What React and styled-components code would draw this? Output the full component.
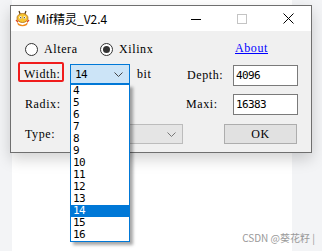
import React from "react";
import styled, { createGlobalStyle } from "styled-components";

const GlobalStyle = createGlobalStyle`
  html, body {
    margin: 0;
    padding: 0;
    width: 322px;
    height: 251px;
    overflow: hidden;
  }
`;

const LABEL_FONT = `"Liberation Serif", "Times New Roman", serif`;
const DIGIT_FONT = `"DejaVu Sans Mono", "Liberation Mono", monospace`;

const Page = styled.div`
  position: relative;
  display: flex;
  width: 322px;
  height: 251px;
`;

const SideStrip = styled.div`
  width: ${(p) => p.$w}px;
  background: #f3f4f6;
`;

const Canvas = styled.div`
  flex: 1;
  background: #ffffff;
`;

const Window = styled.div`
  position: absolute;
  left: 10px;
  top: 5px;
  width: 302px;
  height: 148px;
  box-sizing: border-box;
  border: 1px solid #6f6f6f;
  box-shadow: 0 6px 14px rgba(0, 0, 0, 0.18);
  display: flex;
  flex-direction: column;
`;

const TitleBar = styled.div`
  height: 25px;
  background: #ffffff;
  display: flex;
  align-items: center;
  padding-left: 4px;
`;

const TitleText = styled.span`
  margin-left: 6px;
  font-family: "Noto Sans CJK SC", "Noto Sans", sans-serif;
  font-size: 12px;
  color: #000;
  flex: 1;
`;

const CaptionButton = styled.div`
  width: 46px;
  height: 25px;
  display: flex;
  align-items: center;
  justify-content: center;
`;

const Client = styled.div`
  flex: 1;
  background: #f0f0f0;
  display: flex;
  flex-direction: column;
  padding-top: 8px;
`;

const Row = styled.div`
  display: flex;
  align-items: flex-start;
  height: ${(p) => p.$h}px;
  margin-top: ${(p) => p.$mt || 0}px;
  padding-left: ${(p) => p.$pl}px;
`;

const Text = styled.span`
  font-family: ${LABEL_FONT};
  font-size: 12px;
  letter-spacing: 0.6px;
  color: #000;
  line-height: ${(p) => p.$lh || 20}px;
  width: ${(p) => (p.$w ? `${p.$w}px` : "auto")};
  margin-top: ${(p) => p.$mt || 0}px;
  padding-left: ${(p) => p.$pl || 0}px;
  flex-shrink: 0;
  white-space: nowrap;
`;

const LabelBox = styled.div`
  position: relative;
  width: 46px;
  flex-shrink: 0;
`;

const RedMark = styled.div`
  position: absolute;
  left: -6px;
  top: -2px;
  width: 46px;
  height: 20px;
  box-sizing: border-box;
  border: 2px solid #f01c1c;
  border-radius: 2px;
`;

const RadioOption = styled.label`
  display: flex;
  align-items: center;
  gap: 6px;
  width: ${(p) => p.$w}px;
  height: 20px;
  flex-shrink: 0;
`;

const RadioCircle = styled.span`
  width: 13px;
  height: 13px;
  box-sizing: border-box;
  border-radius: 50%;
  border: 1px solid #333;
  background: #fff;
  display: flex;
  align-items: center;
  justify-content: center;
  &::after {
    content: "";
    display: ${(p) => (p.$checked ? "block" : "none")};
    width: 7px;
    height: 7px;
    border-radius: 50%;
    background: #333;
  }
`;

const Link = styled.a`
  font-family: ${LABEL_FONT};
  font-size: 12px;
  letter-spacing: 0.6px;
  color: #0000ff;
  text-decoration: underline;
  line-height: 18px;
  cursor: pointer;
`;

const Combo = styled.div`
  position: relative;
  width: ${(p) => p.$w}px;
  height: 20px;
  box-sizing: border-box;
  flex-shrink: 0;
  border: 1px solid ${(p) => (p.$focus ? "#0078d7" : "#bcbcbc")};
  background: ${(p) => (p.$focus ? "#cce4f7" : "#e5e5e5")};
  display: flex;
  align-items: center;
  padding: 0 6px 0 4px;
`;

const ComboValue = styled.span`
  flex: 1;
  font-family: ${DIGIT_FONT};
  font-size: 11px;
  letter-spacing: -0.6px;
  color: #000;
`;

const Input = styled.div`
  width: 65px;
  height: 21px;
  box-sizing: border-box;
  flex-shrink: 0;
  margin-top: ${(p) => p.$mt || 0}px;
  border: 1px solid #7a7a7a;
  background: #fff;
  padding-left: 2px;
  font-family: ${DIGIT_FONT};
  font-size: 11px;
  letter-spacing: -0.6px;
  line-height: 19px;
  color: #000;
`;

const Button = styled.div`
  width: 73px;
  height: 20px;
  box-sizing: border-box;
  flex-shrink: 0;
  margin-left: ${(p) => p.$ml}px;
  border: 1px solid #adadad;
  background: #e1e1e1;
  display: flex;
  align-items: center;
  justify-content: center;
  font-family: ${LABEL_FONT};
  font-size: 12px;
  letter-spacing: 0.6px;
  color: #000;
`;

const DropList = styled.ul`
  position: absolute;
  left: -1px;
  top: 19px;
  width: 60px;
  margin: 0;
  padding: 0;
  list-style: none;
  box-sizing: border-box;
  border: 1px solid #0078d7;
  background: #fff;
  box-shadow: 3px 3px 3px rgba(0, 0, 0, 0.35);
  z-index: 10;
`;

const DropItem = styled.li`
  height: 12px;
  line-height: 12px;
  padding-left: 2px;
  font-family: ${DIGIT_FONT};
  font-size: 11px;
  letter-spacing: -0.6px;
  color: ${(p) => (p.$active ? "#fff" : "#000")};
  background: ${(p) => (p.$active ? "#0078d7" : "transparent")};
`;

const Watermark = styled.div`
  position: absolute;
  right: 7px;
  bottom: 6px;
  font-family: "Noto Sans CJK SC", "Noto Sans", sans-serif;
  font-size: 10px;
  color: #9a9a9a;
  white-space: nowrap;
`;

const Chevron = ({ color = "#555" }) => (
  <svg width="9" height="5" viewBox="0 0 9 5">
    <polyline points="0.5,0.5 4.5,4.5 8.5,0.5" fill="none" stroke={color} strokeWidth="1" />
  </svg>
);

const AppIcon = () => (
  <svg width="15" height="17" viewBox="0 0 15 17">
    <path d="M4 1 L5.5 5 M11 1 L9.5 5" stroke="#5a3a10" strokeWidth="1.2" />
    <ellipse cx="7.5" cy="8" rx="5.5" ry="4.5" fill="#f7c531" stroke="#b06a12" strokeWidth="0.8" />
    <circle cx="5.5" cy="7.5" r="1.3" fill="#fff" />
    <circle cx="9.5" cy="7.5" r="1.3" fill="#fff" />
    <circle cx="5.7" cy="7.7" r="0.6" fill="#222" />
    <circle cx="9.3" cy="7.7" r="0.6" fill="#222" />
    <path d="M2 12 Q7.5 18 13 12 L12 15 Q7.5 17.5 3 15 Z" fill="#f08a1c" />
    <path d="M1 10 L3 12 M14 10 L12 12" stroke="#e0451c" strokeWidth="1.4" />
  </svg>
);

const widths = [4, 5, 6, 7, 8, 9, 10, 11, 12, 13, 14, 15, 16];

export default function App() {
  return (
    <Page>
      <GlobalStyle />
      <SideStrip $w={12} />
      <Canvas />
      <SideStrip $w={30} />

      <Window>
        <TitleBar>
          <AppIcon />
          <TitleText>Mif精灵_V2.4</TitleText>
          <CaptionButton>
            <svg width="10" height="10" viewBox="0 0 10 10">
              <line x1="0" y1="5.5" x2="10" y2="5.5" stroke="#000" strokeWidth="1" />
            </svg>
          </CaptionButton>
          <CaptionButton>
            <svg width="10" height="10" viewBox="0 0 10 10">
              <rect x="0.5" y="0.5" width="9" height="9" fill="none" stroke="#c4c4c4" strokeWidth="1" />
            </svg>
          </CaptionButton>
          <CaptionButton>
            <svg width="11" height="11" viewBox="0 0 11 11">
              <path d="M0.5 0.5 L10.5 10.5 M10.5 0.5 L0.5 10.5" stroke="#000" strokeWidth="1" />
            </svg>
          </CaptionButton>
        </TitleBar>

        <Client>
          <Row $h={20} $pl={14}>
            <RadioOption $w={75}>
              <RadioCircle />
              <Text>Altera</Text>
            </RadioOption>
            <RadioOption $w={135}>
              <RadioCircle $checked />
              <Text>Xilinx</Text>
            </RadioOption>
            <Link>About</Link>
          </Row>

          <Row $h={22} $mt={5} $pl={13}>
            <LabelBox>
              <RedMark />
              <Text $lh={20}>Width:</Text>
            </LabelBox>
            <Combo $w={60} $focus>
              <ComboValue>14</ComboValue>
              <Chevron color="#444" />
              <DropList>
                {widths.map((n) => (
                  <DropItem key={n} $active={n === 14}>
                    {n}
                  </DropItem>
                ))}
              </DropList>
            </Combo>
            <Text $w={50} $lh={20} $pl={7}>
              bit
            </Text>
            <Text $w={46} $lh={21} $mt={1}>
              Depth:
            </Text>
            <Input $mt={1}>4096</Input>
          </Row>

          <Row $h={21} $mt={8} $pl={14}>
            <Text $w={161} $lh={21}>
              Radix:
            </Text>
            <Text $w={47} $lh={21}>
              Maxi:
            </Text>
            <Input>16383</Input>
          </Row>

          <Row $h={20} $mt={9} $pl={14}>
            <Text $w={45} $lh={20}>
              Type:
            </Text>
            <Combo $w={113}>
              <ComboValue />
              <Chevron color="#777" />
            </Combo>
            <Button $ml={41}>OK</Button>
          </Row>
        </Client>
      </Window>

      <Watermark>CSDN @葵花籽 |</Watermark>
    </Page>
  );
}
